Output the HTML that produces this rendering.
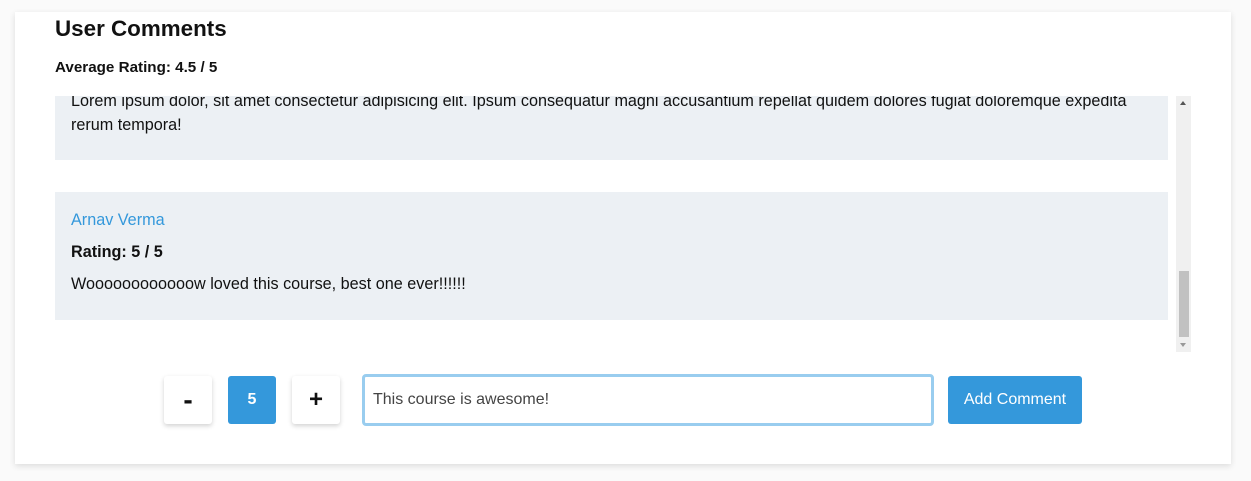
<!DOCTYPE html>
<html><head><style>
*{box-sizing:border-box;margin:0;padding:0}
body{width:1251px;height:481px;background:#fafafa;font-family:"Liberation Sans",sans-serif;position:relative;overflow:hidden;color:#111}
.card{position:absolute;left:15px;top:12px;width:1216px;height:452px;background:#fff;box-shadow:0 2px 6px rgba(0,0,0,.12)}
h1{position:absolute;left:55px;top:16px;font-size:22.4px;font-weight:bold}
.avg{position:absolute;left:55px;top:59px;font-size:15.2px;font-weight:bold}
.scroll{position:absolute;left:55px;top:96px;width:1136px;height:256px;overflow:hidden}
.box{position:absolute;left:0;width:1113px;background:#ecf0f4;padding:0 16px;font-size:16.2px;line-height:24px}
.sb{position:absolute;right:0;top:0;width:15px;height:256px;background:#f0f0f0}
.thumb{position:absolute;left:3px;top:175px;width:10px;height:66px;background:#c1c1c1}
.btn{position:absolute;top:376px;width:48px;height:48px;border-radius:3px;background:#fff;box-shadow:0 2px 5px rgba(0,0,0,.18);text-align:center;font-weight:bold;font-size:24px;line-height:48px}
</style></head><body>
<div class="card"></div>
<h1>User Comments</h1>
<div class="avg">Average Rating: 4.5 / 5</div>
<div class="scroll">
 <div class="box" style="top:-12px;height:76px;padding-top:5px">Lorem ipsum dolor, sit amet consectetur adipisicing elit. Ipsum consequatur magni accusantium repellat quidem dolores fugiat doloremque expedita<br>rerum tempora!</div>
 <div class="box" style="top:96px;height:128px;padding-top:16px">
  <div style="color:#3498db;margin-bottom:8px">Arnav Verma</div>
  <div style="font-weight:bold;margin-bottom:8px">Rating: 5 / 5</div>
  <div>Woooooooooooow loved this course, best one ever!!!!!!</div>
 </div>
 <div class="sb"><div style="position:absolute;left:4px;top:5px;border:3.5px solid transparent;border-bottom:4px solid #555;border-top:0"></div><div class="thumb"></div><div style="position:absolute;left:4px;bottom:5px;border:3.5px solid transparent;border-top:4px solid #999;border-bottom:0"></div></div>
</div>
<div class="btn" style="left:164px;font-size:28px">-</div>
<div class="btn" style="left:228px;background:#3498db;color:#fff;font-size:16px;box-shadow:none">5</div>
<div class="btn" style="left:292px">+</div>
<div style="position:absolute;left:362px;top:374px;width:572px;height:52px;border:3px solid #99cdef;border-radius:4px;font-size:16px;color:#444;padding-left:8px;line-height:46px">This course is awesome!</div>
<div style="position:absolute;left:948px;top:376px;width:134px;height:48px;background:#3498db;border-radius:3px;color:#fff;font-size:16px;text-align:center;line-height:48px">Add Comment</div>
</body></html>
